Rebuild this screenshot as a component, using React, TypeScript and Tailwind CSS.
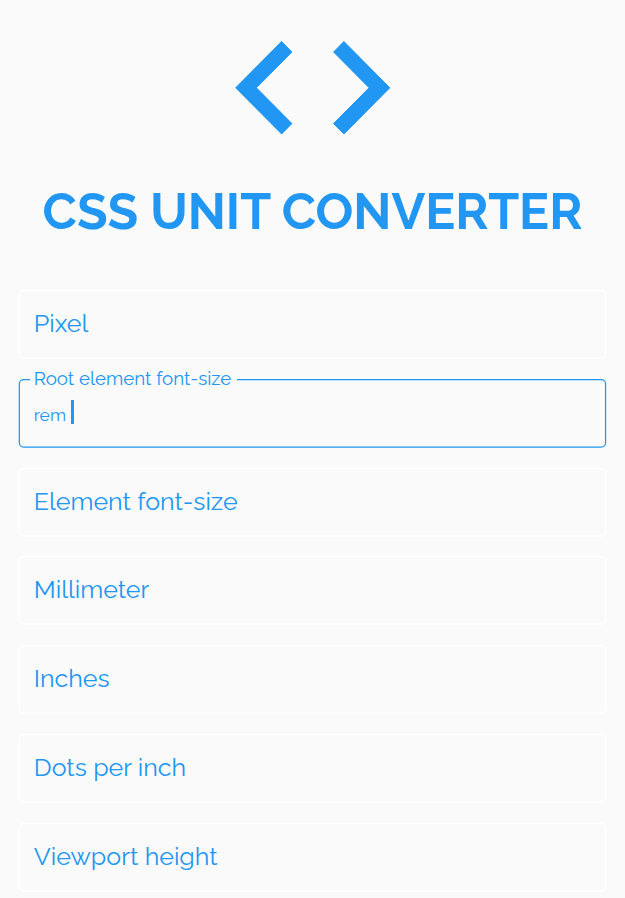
import React from "react";

function Outline({ focused = false }: { focused?: boolean }) {
  return (
    <div
      className={`pointer-events-none absolute left-0 top-0 h-[55px] w-[470px] origin-top-left -translate-x-[0.3px] scale-[1.25] rounded-[4px] border ${
        focused ? "border-[#2196f3]" : "border-white"
      }`}
    />
  );
}

function Field({ label }: { label: string }) {
  return (
    <div className="relative flex h-[69px] items-center pb-[3.15px] pl-[15px]">
      <Outline />
      <span className="whitespace-nowrap text-[25px] leading-8">{label}</span>
    </div>
  );
}

function FocusedField() {
  return (
    <div className="relative h-[69px]">
      <Outline focused />
      <div className="absolute -top-[13px] left-[10.75px] flex h-6 w-[207.75px] items-center bg-[#fafafa] pl-[4.25px]">
        <span className="whitespace-nowrap text-[18.75px]">Root element font-size</span>
      </div>
      <div className="flex items-center pl-[15px] pt-[20px]">
        <span className="w-[37px] pb-px pt-[4px] text-[17.5px] leading-6">rem</span>
        <span className="mb-[3px] h-6 w-[3px] bg-[#2196f3]" />
      </div>
    </div>
  );
}

export default function App() {
  return (
    <main className="h-[898px] w-[625px] overflow-hidden bg-[#fafafa] font-['Raleway','Lato',sans-serif] text-[#2196f3]">
      <header className="flex flex-col items-center pt-[41px]">
        <svg width="156" height="94" viewBox="0 0 156 94" fill="#2196f3" stroke="#2196f3" strokeLinejoin="round" className="overflow-visible">
          <path d="M46.6 0.5 56.9 11 21.4 46.8 56.9 82.6 46.6 93 0.7 46.8Z" />
          <path d="M108.9 0.5 98.6 11 134.1 46.8 98.6 82.6 108.9 93 154.8 46.8Z" />
        </svg>
        <h1 className="mt-[47px] whitespace-nowrap text-[50px] font-bold leading-[60px]">CSS UNIT CONVERTER</h1>
      </header>
      <section className="mt-[48px] flex flex-col gap-[19.83px] px-[18.75px]">
        <Field label="Pixel" />
        <FocusedField />
        <Field label="Element font-size" />
        <Field label="Millimeter" />
        <Field label="Inches" />
        <Field label="Dots per inch" />
        <Field label="Viewport height" />
      </section>
    </main>
  );
}
